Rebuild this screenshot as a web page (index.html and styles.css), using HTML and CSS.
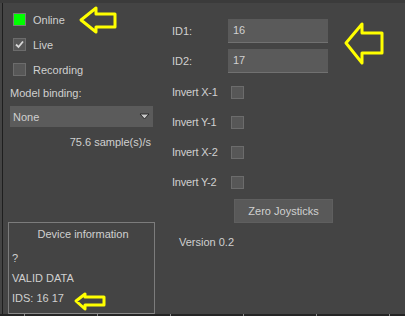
FILE: index.html
```html
<!DOCTYPE html>
<html lang="en">
<head>
    <meta charset="UTF-8">
    <title>Device panel</title>
    <link rel="stylesheet" href="styles.css">
</head>
<body>
    <div class="window">
        <div class="topbar"></div>
        <div class="main">
            <div class="left">
                <div class="check-row">
                    <span class="box online"></span>
                    <span>Online</span>
                </div>
                <div class="check-row">
                    <span class="box checked">
                        <svg width="11" height="11" viewBox="0 0 11 11"><path d="M2 5.5 L4.5 8 L9 2.5" fill="none" stroke="#d8d8d8" stroke-width="1.8"/></svg>
                    </span>
                    <span>Live</span>
                </div>
                <div class="check-row">
                    <span class="box"></span>
                    <span>Recording</span>
                </div>
                <div class="label">Model binding:</div>
                <div class="dropdown">
                    <span>None</span>
                    <svg width="11" height="7" viewBox="0 0 11 7"><path d="M1 1 L10 1 L5.5 6 Z" fill="#c8c8c8" stroke="#2a2a2a" stroke-width="1"/></svg>
                </div>
                <div class="rate">75.6 sample(s)/s</div>
                <div class="device-info">
                    <div class="info-title">Device information</div>
                    <div class="info-line">?</div>
                    <div class="info-line">VALID DATA</div>
                    <div class="info-line">IDS: 16 17</div>
                </div>
            </div>
            <div class="right">
                <div class="field-row first">
                    <span class="field-label">ID1:</span>
                    <div class="input">16</div>
                </div>
                <div class="field-row">
                    <span class="field-label">ID2:</span>
                    <div class="input">17</div>
                </div>
                <div class="invert-list">
                    <div class="invert-row"><span class="invert-label">Invert X-1</span><span class="box"></span></div>
                    <div class="invert-row"><span class="invert-label">Invert Y-1</span><span class="box"></span></div>
                    <div class="invert-row"><span class="invert-label">Invert X-2</span><span class="box"></span></div>
                    <div class="invert-row"><span class="invert-label">Invert Y-2</span><span class="box"></span></div>
                </div>
                <div class="button">Zero Joysticks</div>
                <div class="version">Version 0.2</div>
            </div>
        </div>
        <div class="bottombar"></div>

        <!-- yellow annotation arrows drawn over the panel -->
        <svg class="arrows" width="405" height="316" viewBox="0 0 405 316">
            <g fill="none" stroke="#ffff00" stroke-width="3" stroke-linejoin="round">
                <polygon points="81,20 96,8 96,14 115,14 115,27 96,27 96,32"/>
                <polygon points="346,43 362,24 362,33 382,33 382,53 362,53 362,63"/>
                <polygon points="76,301 85,294 85,297 104,297 104,305 85,305 85,309"/>
            </g>
        </svg>
    </div>
</body>
</html>
```

FILE: styles.css
```css
body {
    margin: 0;
    background: #444444;
    font-family: "Liberation Sans", Arial, sans-serif;
    font-size: 11px;
    color: #d0d0d0;
    overflow: hidden;
}

.window {
    position: relative;
    width: 405px;
    height: 316px;
    display: flex;
    flex-direction: column;
}

.topbar {
    height: 3px;
    background: #3b3b3b;
}

.main {
    flex: 1;
    display: flex;
    margin-left: 2px;
    border-left: 1px solid #1e1e1e;
}

.left {
    box-sizing: border-box;
    width: 151px;
    flex-shrink: 0;
    display: flex;
    flex-direction: column;
    padding-left: 7px;
    padding-top: 4px;
}

.check-row {
    height: 25px;
    display: flex;
    align-items: center;
    gap: 7px;
    padding-left: 3px;
}

.box {
    width: 11px;
    height: 11px;
    background: #575757;
    border: 1px solid #6c6c6c;
    display: flex;
    align-items: center;
    justify-content: center;
    flex-shrink: 0;
}

.box.online {
    background: #00ff00;
    border-color: #7a7a7a;
}

.label {
    margin-top: 4px;
    line-height: 14px;
}

.dropdown {
    margin-top: 6px;
    width: 137px;
    height: 21px;
    background: #5b5b5b;
    display: flex;
    align-items: center;
    justify-content: space-between;
    padding: 0 3px 0 3px;
}

.rate {
    margin-top: 8px;
    line-height: 14px;
    text-align: right;
    width: 141px;
}

.device-info {
    margin-top: auto;
    margin-left: -2px;
    width: 142px;
    height: 90px;
    border: 1px solid #7c7c7c;
    border-bottom-color: #8a8a8a;
    padding-left: 3px;
}

.info-title {
    text-align: center;
    line-height: 14px;
    margin-top: 4px;
    margin-bottom: 10px;
}

.info-line {
    line-height: 14px;
    margin-bottom: 6px;
}

.right {
    flex: 1;
    padding-left: 18px;
    padding-top: 16px;
    display: flex;
    flex-direction: column;
}

.field-row {
    display: flex;
    align-items: center;
    height: 24px;
    margin-top: 6px;
}

.field-row.first {
    margin-top: 0;
}

.field-label {
    width: 56px;
}

.input {
    width: 95px;
    height: 23px;
    line-height: 23px;
    background: #5a5a5a;
    border-bottom: 1px solid #717171;
    padding-left: 5px;
}

.invert-list {
    margin-top: 4px;
}

.invert-row {
    height: 30px;
    display: flex;
    align-items: center;
}

.invert-label {
    width: 59px;
    letter-spacing: -0.2px;
}

.button {
    margin-top: 2px;
    margin-left: 62px;
    width: 97px;
    height: 22px;
    line-height: 22px;
    background: #595959;
    border: 1px solid #5f5f5f;
    text-align: center;
}

.version {
    margin-top: 12px;
    margin-left: 7px;
    line-height: 14px;
}

.bottombar {
    height: 2px;
    background-color: #242424;
    background-image: repeating-linear-gradient(to right, #8a8a8a 0, #8a8a8a 1px, transparent 1px, transparent 73px);
    background-position: 24px 0;
}

.arrows {
    position: absolute;
    left: 0;
    top: 0;
    pointer-events: none;
}
```
